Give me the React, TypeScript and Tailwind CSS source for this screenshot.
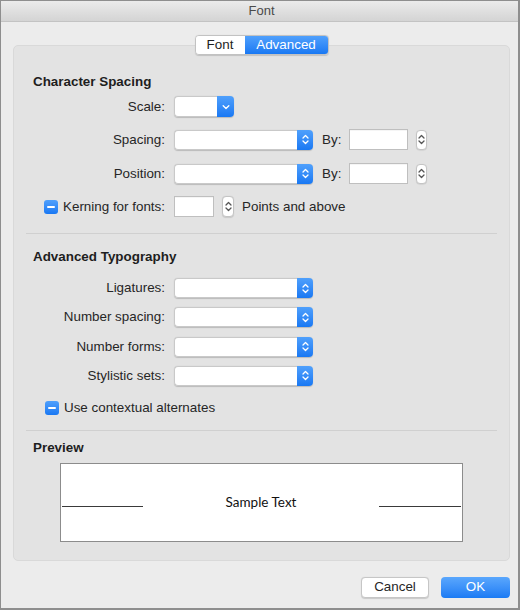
import React from "react";

const FONT = "font-['Liberation_Sans',Arial,sans-serif]";

function UpDown({ color = "white" }: { color?: string }) {
  return (
    <svg width="7" height="11" viewBox="0 0 7 11" fill="none">
      <path d="M1 4 L3.5 1.5 L6 4" stroke={color} strokeWidth="1.3" strokeLinecap="round" strokeLinejoin="round" />
      <path d="M1 7 L3.5 9.5 L6 7" stroke={color} strokeWidth="1.3" strokeLinecap="round" strokeLinejoin="round" />
    </svg>
  );
}

function Down() {
  return (
    <svg width="8" height="6" viewBox="0 0 8 6" fill="none">
      <path d="M1.2 1.8 L4 4.4 L6.8 1.8" stroke="white" strokeWidth="1.4" strokeLinecap="round" strokeLinejoin="round" />
    </svg>
  );
}

function Popup({ w, h = 20, single = false }: { w: number; h?: number; single?: boolean }) {
  return (
    <div className="flex shadow-[0_0.5px_1px_rgba(0,0,0,0.18)] rounded-[4px]" style={{ width: w, height: h }}>
      <div className="flex-1 bg-white border border-r-0 border-[#c9c9c9] rounded-l-[4px]" />
      <div
        className={`${single ? "w-[17px]" : "w-[16px]"} flex items-center justify-center rounded-r-[4px] bg-gradient-to-b from-[#4fa0fc] to-[#1878f3]`}
      >
        {single ? <Down /> : <UpDown />}
      </div>
    </div>
  );
}

function Field({ w, h = 21 }: { w: number; h?: number }) {
  return (
    <div
      className="bg-white border border-[#bfbfbf] shadow-[inset_0_1px_0_rgba(0,0,0,0.04)]"
      style={{ width: w, height: h }}
    />
  );
}

function Stepper({ w = 11, h = 20 }: { w?: number; h?: number }) {
  return (
    <div
      className="bg-white border border-[#c4c4c4] rounded-[4px] flex items-center justify-center shadow-[0_0.5px_1px_rgba(0,0,0,0.12)]"
      style={{ width: w, height: h }}
    >
      <UpDown color="#555555" />
    </div>
  );
}

function Check() {
  return (
    <div className="w-[14px] h-[14px] rounded-[3px] bg-gradient-to-b from-[#4fa0fc] to-[#1878f3] flex items-center justify-center shrink-0">
      <div className="w-[8px] h-[2px] bg-white rounded-[1px]" />
    </div>
  );
}

function Row({ label, children, h = 21 }: { label: React.ReactNode; children: React.ReactNode; h?: number }) {
  return (
    <div className="flex items-center" style={{ height: h }}>
      <div className="w-[139px] shrink-0 flex justify-end items-center text-[13.4px] leading-[16px] text-[#262626]">
        {label}
      </div>
      <div className="ml-[9px] flex items-center">{children}</div>
    </div>
  );
}

function Heading({ children }: { children: React.ReactNode }) {
  return <div className="pl-[7px] text-[13.4px] leading-[16px] font-bold text-[#1e1e1e]">{children}</div>;
}

function Divider() {
  return <div className="h-px bg-[#d0d0d0]" />;
}

export default function App() {
  return (
    <div
      className={`${FONT} w-[520px] h-[610px] bg-[#ececec] border-l border-t border-r-2 border-b-2 border-[#8e8e8e] flex flex-col box-border`}
    >
      {/* title bar */}
      <div className="h-[21px] shrink-0 bg-gradient-to-b from-[#ebebeb] to-[#d4d4d4] border-b border-[#c3c3c3] flex items-center justify-center text-[13px] text-[#4a4a4a] leading-[16px]">
        <span className="ml-[4px]">Font</span>
      </div>

      <div className="pl-[12px] pr-[8px] flex flex-col">
        {/* tabs */}
        <div className="relative z-10 mt-[13px] self-center flex h-[20px] rounded-[4px] border border-[#c2c2c2] shadow-[0_0.5px_1px_rgba(0,0,0,0.15)] overflow-hidden text-[13.4px] leading-[16px]">
          <div className="w-[49px] bg-white flex items-center justify-center text-[#1e1e1e]">Font</div>
          <div className="w-[83px] bg-gradient-to-b from-[#4fa0fc] to-[#1878f3] flex items-center justify-center text-white">
            Advanced
          </div>
        </div>

        {/* grouped panel */}
        <div className="-mt-[10px] bg-[#e3e3e3] border border-[#d9d9d9] rounded-[5px] px-[12px] pt-[28px] pb-[18px] flex flex-col">
          <Heading>Character Spacing</Heading>

          <div className="mt-[6px]">
            <Row label="Scale:">
              <Popup w={60} h={21} single />
            </Row>
          </div>
          <div className="mt-[12px]">
            <Row label="Spacing:">
              <Popup w={139} />
              <span className="ml-[9px] text-[13.4px] leading-[16px] text-[#262626]">By:</span>
              <div className="ml-[8px]">
                <Field w={59} />
              </div>
              <div className="ml-[8px]">
                <Stepper />
              </div>
            </Row>
          </div>
          <div className="mt-[13px]">
            <Row label="Position:">
              <Popup w={139} />
              <span className="ml-[9px] text-[13.4px] leading-[16px] text-[#262626]">By:</span>
              <div className="ml-[8px]">
                <Field w={59} />
              </div>
              <div className="ml-[8px]">
                <Stepper />
              </div>
            </Row>
          </div>
          <div className="mt-[12px]">
            <Row
              label={
                <span className="flex items-center gap-[5px]">
                  <Check />
                  Kerning for fonts:
                </span>
              }
            >
              <Field w={40} />
              <div className="ml-[8px]">
                <Stepper w={12} h={21} />
              </div>
              <span className="ml-[8px] text-[13.4px] leading-[16px] text-[#262626]">Points and above</span>
            </Row>
          </div>

          <div className="mt-[16px]">
            <Divider />
          </div>

          <div className="mt-[15px]">
            <Heading>Advanced Typography</Heading>
          </div>

          <div className="mt-[13px] flex flex-col gap-[9.33px]">
            <Row label="Ligatures:" h={20}>
              <Popup w={139} />
            </Row>
            <Row label="Number spacing:" h={20}>
              <Popup w={139} />
            </Row>
            <Row label="Number forms:" h={20}>
              <Popup w={139} />
            </Row>
            <Row label="Stylistic sets:" h={20}>
              <Popup w={139} />
            </Row>
          </div>

          <div className="mt-[15px] pl-[19px] flex items-center gap-[5px] h-[14px] text-[13.4px] leading-[16px] text-[#262626]">
            <Check />
            Use contextual alternates
          </div>

          <div className="mt-[15px]">
            <Divider />
          </div>

          <div className="mt-[9px]">
            <Heading>Preview</Heading>
          </div>

          {/* preview box */}
          <div className="mt-[7px] self-center w-[403px] h-[79px] bg-white border border-[#8c8c8c] flex items-center px-[1px]">
            <div className="w-[81px] h-px bg-[#3a3a3a] mt-[9px]" />
            <div className="flex-1 text-center text-[13.5px] leading-[16px] text-[#111] font-['Lato',sans-serif]">
              Sample Text
            </div>
            <div className="w-[82px] h-px bg-[#3a3a3a] mt-[9px]" />
          </div>
        </div>

        {/* buttons */}
        <div className="mt-[16px] flex justify-end gap-[12px]">
          <div className="w-[68px] h-[21px] bg-white border border-[#c6c6c6] rounded-[4px] shadow-[0_0.5px_1px_rgba(0,0,0,0.15)] flex items-center justify-center text-[13.4px] leading-[16px] text-[#262626]">
            Cancel
          </div>
          <div className="w-[69px] h-[21px] rounded-[4px] bg-gradient-to-b from-[#5aa7fd] to-[#1a7bf4] flex items-center justify-center text-[13.4px] leading-[16px] text-white">
            OK
          </div>
        </div>
      </div>
    </div>
  );
}
